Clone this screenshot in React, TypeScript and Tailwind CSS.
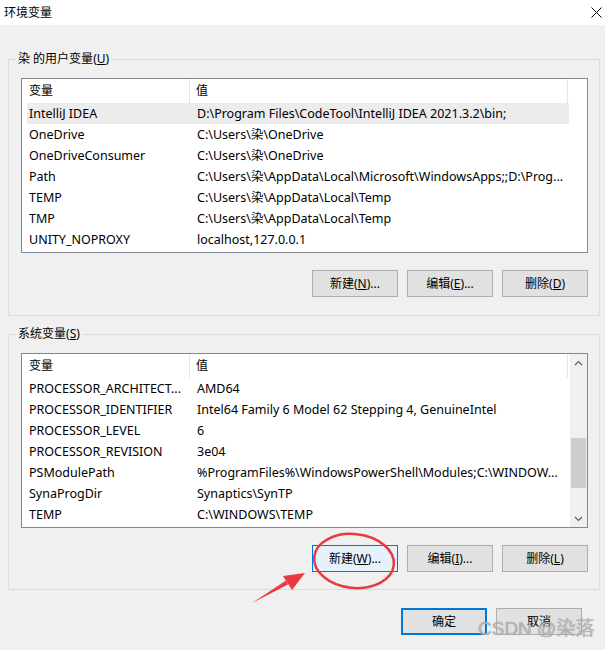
import React from "react";

const USER_VARS: [string, string][] = [
  ["IntelliJ IDEA", "D:\\Program Files\\CodeTool\\IntelliJ IDEA 2021.3.2\\bin;"],
  ["OneDrive", "C:\\Users\\染\\OneDrive"],
  ["OneDriveConsumer", "C:\\Users\\染\\OneDrive"],
  ["Path", "C:\\Users\\染\\AppData\\Local\\Microsoft\\WindowsApps;;D:\\Prog..."],
  ["TEMP", "C:\\Users\\染\\AppData\\Local\\Temp"],
  ["TMP", "C:\\Users\\染\\AppData\\Local\\Temp"],
  ["UNITY_NOPROXY", "localhost,127.0.0.1"],
];

const SYS_VARS: [string, string][] = [
  ["PROCESSOR_ARCHITECT...", "AMD64"],
  ["PROCESSOR_IDENTIFIER", "Intel64 Family 6 Model 62 Stepping 4, GenuineIntel"],
  ["PROCESSOR_LEVEL", "6"],
  ["PROCESSOR_REVISION", "3e04"],
  ["PSModulePath", "%ProgramFiles%\\WindowsPowerShell\\Modules;C:\\WINDOW..."],
  ["SynaProgDir", "Synaptics\\SynTP"],
  ["TEMP", "C:\\WINDOWS\\TEMP"],
];

function Label({ text, mn, after = "" }: { text: string; mn: string; after?: string }) {
  return (
    <span>
      {text}(<span className="underline">{mn}</span>){after}
    </span>
  );
}

function Btn({
  children,
  variant = "normal",
}: {
  children: React.ReactNode;
  variant?: "normal" | "focus" | "default";
}) {
  const cls =
    variant === "focus"
      ? "border border-[#0078d7] bg-[#e5f1fb]"
      : variant === "default"
        ? "border-2 border-[#0078d7] bg-[#e1e1e1]"
        : "border border-[#adadad] bg-[#e1e1e1]";
  return (
    <div className={`w-[86px] h-[27px] flex items-center justify-center text-[12px] text-black ${cls}`}>
      {children}
    </div>
  );
}

function VarList({ rows, selected, scroll }: { rows: [string, string][]; selected?: number; scroll?: boolean }) {
  return (
    <div className="ml-[12px] w-[567px] h-[175px] border border-[#828790] bg-white flex">
      <div className="w-[548px] flex flex-col">
        <div className="h-[24px] flex items-center shrink-0">
          <div className="w-[168px] pl-[7px] h-full flex items-center border-r border-[#e5e5e5]">变量</div>
          <div className="w-[378px] pl-[6px] h-full flex items-center border-r border-[#e5e5e5]">值</div>
        </div>
        <div className="pl-[5px]">
          {rows.map(([name, value], i) => (
            <div
              key={name + i}
              className={`w-[542px] h-[21px] flex items-center whitespace-nowrap text-[12.5px] pt-[1px] ${i === selected ? "bg-[#ececec]" : ""}`}
            >
              <div className="w-[163px] pl-[2px] overflow-hidden">{name}</div>
              <div className="flex-1 pl-[7px] overflow-hidden">{value}</div>
            </div>
          ))}
        </div>
      </div>
      {scroll ? (
        <div className="w-[17px] ml-auto bg-[#f0f0f0] flex flex-col items-center">
          <div className="h-[17px] flex items-center justify-center">
            <svg width="9" height="6" viewBox="0 0 9 6">
              <path d="M1 5 L4.5 1.5 L8 5" fill="none" stroke="#606060" strokeWidth="1.2" />
            </svg>
          </div>
          <div className="mt-[67px] w-[15px] h-[50px] bg-[#cdcdcd]" />
          <div className="mt-auto h-[17px] flex items-center justify-center">
            <svg width="9" height="6" viewBox="0 0 9 6">
              <path d="M1 1 L4.5 4.5 L8 1" fill="none" stroke="#606060" strokeWidth="1.2" />
            </svg>
          </div>
        </div>
      ) : null}
    </div>
  );
}

function Group({
  title,
  children,
  height,
  className = "",
}: {
  title: React.ReactNode;
  children: React.ReactNode;
  height: string;
  className?: string;
}) {
  return (
    <div className={`relative w-[592px] border border-[#dcdcdc] ${height} ${className}`}>
      <div className="absolute -top-[9px] left-[7px] px-[2px] bg-[#f0f0f0] leading-[16px]">{title}</div>
      {children}
    </div>
  );
}

export default function App() {
  return (
    <div
      className="relative w-[605px] h-[650px] overflow-hidden bg-[#f0f0f0] text-[12px] text-black"
      style={{ fontFamily: '"Noto Sans", "Noto Sans CJK SC", sans-serif' }}
    >
      {/* Title bar */}
      <div className="h-[25px] bg-white flex items-center justify-between pl-[4px] pr-[3px]">
        <span className="text-[12px]">环境变量</span>
        <svg width="11" height="11" viewBox="0 0 11 11">
          <path d="M0.5 0.5 L10.5 10.5 M10.5 0.5 L0.5 10.5" stroke="#000" strokeWidth="1" />
        </svg>
      </div>

      <div className="ml-[8px] flex flex-col">
        <Group title={<Label text="染 的用户变量" mn="U" />} height="h-[257px]" className="mt-[34px]">
          <div className="pt-[18px]">
            <VarList rows={USER_VARS} selected={0} />
          </div>
          <div className="mt-[17px] pr-[11px] flex justify-end gap-[9px]">
            <Btn>
              <Label text="新建" mn="N" after="..." />
            </Btn>
            <Btn>
              <Label text="编辑" mn="E" after="..." />
            </Btn>
            <Btn>
              <Label text="删除" mn="D" />
            </Btn>
          </div>
        </Group>

        <Group title={<Label text="系统变量" mn="S" />} height="h-[256px]" className="mt-[18px]">
          <div className="pt-[18px]">
            <VarList rows={SYS_VARS} scroll />
          </div>
          <div className="mt-[17px] pr-[11px] flex justify-end gap-[9px]">
            <Btn variant="focus">
              <Label text="新建" mn="W" after="..." />
            </Btn>
            <Btn>
              <Label text="编辑" mn="I" after="..." />
            </Btn>
            <Btn>
              <Label text="删除" mn="L" />
            </Btn>
          </div>
        </Group>

        <div className="mt-[18px] pr-[18px] w-[592px] flex justify-end gap-[9px]">
          <Btn variant="default">确定</Btn>
          <Btn>取消</Btn>
        </div>
      </div>

      {/* Red annotation */}
      <svg className="absolute left-0 top-0 pointer-events-none" width="605" height="650" viewBox="0 0 605 650">
        <ellipse
          cx="354"
          cy="561"
          rx="40"
          ry="27"
          fill="none"
          stroke="#ea3a3f"
          strokeWidth="2.5"
          transform="rotate(6 354 561)"
        />
        <polygon points="252,603 286,580.5 288,584.5" fill="#ea3a3f" />
        <polygon points="305,573 283,576 292,590" fill="#ea3a3f" />
      </svg>

      {/* Watermark */}
      <div
        className="absolute left-[478px] top-[617px] text-[19px] leading-[24px] text-[#c4c4c4]/70 whitespace-nowrap"
        style={{ fontFamily: '"Liberation Sans", "Noto Sans CJK SC", sans-serif', textShadow: "0 0 1px #888" }}
      >
        CSDN @染落
      </div>
    </div>
  );
}
